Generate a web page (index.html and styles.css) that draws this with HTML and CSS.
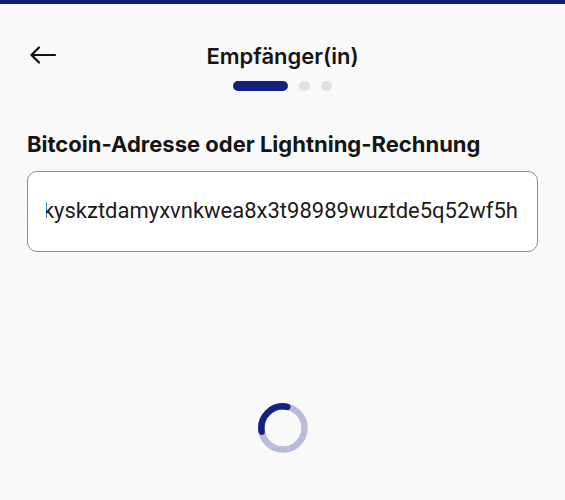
FILE: index.html
```html
<!DOCTYPE html>
<html lang="de">
<head>
<meta charset="utf-8">
<title>Empfänger(in)</title>
<link rel="stylesheet" href="styles.css">
</head>
<body>
<div class="topbar"></div>
<header class="header">
  <button class="back" aria-label="Zurück">
    <svg width="26" height="18" viewBox="0 0 26 18" fill="none" stroke="#111" stroke-width="2.2" stroke-linecap="round" stroke-linejoin="round">
      <path d="M25 9H2M9 1.5L1.5 9 9 16.5"/>
    </svg>
  </button>
  <h1 class="title">Empfänger(in)</h1>
  <span></span>
</header>
<div class="steps">
  <span class="step active"></span>
  <span class="step"></span>
  <span class="step"></span>
</div>
<main class="content">
  <label class="label">Bitcoin-Adresse oder Lightning-Rechnung</label>
  <div class="field">
    <div class="scroll">
      <span class="value">kyskztdamyxvnkwea8x3t98989wuztde5q52wf5h</span>
    </div>
  </div>
  <div class="loader">
    <svg width="50" height="50" viewBox="0 0 50 50">
      <circle cx="25" cy="25" r="21.5" fill="none" stroke="#b9bcd9" stroke-width="6.5"/>
      <path d="M3.7 28.7A21.5 21.5 0 0 1 29.3 3.9" fill="none" stroke="#15217e" stroke-width="6.5" stroke-linecap="round"/>
    </svg>
  </div>
</main>
</body>
</html>
```
FILE: styles.css
```css
* { box-sizing: border-box; }
html, body { margin: 0; padding: 0; }
body {
  background: #f9f9f9;
  font-family: "Inter", "Noto Sans", sans-serif;
  color: #161616;
  width: 565px;
  height: 500px;
  overflow: hidden;
}
.topbar {
  height: 4px;
  background: #131d79;
}
.header {
  display: grid;
  grid-template-columns: 1fr auto 1fr;
  align-items: center;
  padding: 37px 30px 0 30px;
  height: 67px;
}
.back {
  justify-self: start;
  border: 0;
  background: none;
  padding: 0;
  width: 26px;
  height: 18px;
  display: flex;
  margin-top: -3px;
}
.title {
  margin: 0;
  font-size: 22px;
  font-weight: 600;
  line-height: 26px;
  color: #151515;
}
.steps {
  display: flex;
  justify-content: center;
  align-items: center;
  gap: 11px;
  margin-top: 10px;
  height: 10px;
}
.step {
  width: 11px;
  height: 10px;
  border-radius: 5px;
  background: #e1e1e4;
}
.step.active {
  width: 55px;
  background: #14207f;
}
.content {
  padding: 0 27px;
  display: flex;
  flex-direction: column;
}
.label {
  margin-top: 40px;
  font-size: 22px;
  font-weight: 700;
  line-height: 26px;
  color: #151515;
}
.field {
  margin-top: 14px;
  height: 81px;
  background: #fff;
  border: 1px solid #8e8e8e;
  border-radius: 10px;
  display: flex;
  align-items: center;
  padding: 0 19px 2px 18px;
}
.scroll {
  flex: 1;
  min-width: 0;
  overflow: hidden;
  display: flex;
  justify-content: flex-end;
}
.value {
  font-family: "Roboto", "Liberation Sans", sans-serif;
  font-size: 22px;
  line-height: 28px;
  color: #1b1b1b;
  white-space: nowrap;
  flex-shrink: 0;
}
.loader {
  display: flex;
  justify-content: center;
  margin-top: 151px;
  padding-left: 1px;
}
```
